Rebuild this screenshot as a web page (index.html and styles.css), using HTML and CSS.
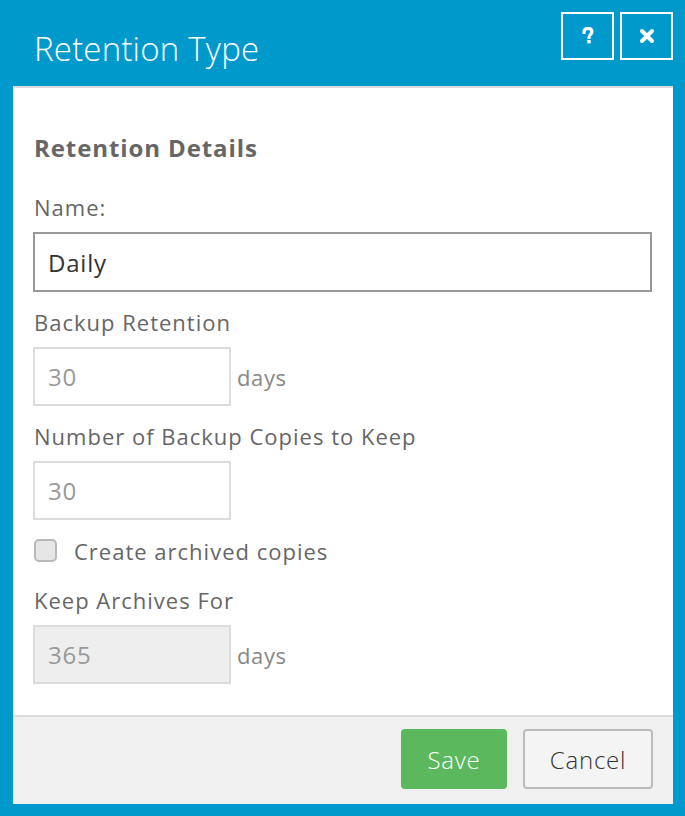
FILE: index.html
```html
<!DOCTYPE html>
<html lang="en">
  <head>
    <meta charset="UTF-8" />
    <meta name="viewport" content="width=device-width, initial-scale=1.0" />
    <title>Retention Type</title>

    <link rel="stylesheet" href="styles.css">
  </head>
  <body>
    <div class="modal">
      <div class="modal-header">
        <h1 class="modal-title">Retention Type</h1>
        <div class="header-buttons">
          <button class="header-btn" title="Help">
            <svg width="14" height="18" viewBox="0 0 14 18">
              <path d="M3 5.5 C3 2.5 5 1.5 7 1.5 C9.5 1.5 11 3 11 5 C11 7.2 8 7.8 8 10.5" fill="none" stroke="#fff" stroke-width="3.2" stroke-linecap="square"/>
              <rect x="6.3" y="13" width="3.4" height="3.4" fill="#fff"/>
            </svg>
          </button>
          <button class="header-btn" title="Close">
            <svg width="16" height="16" viewBox="0 0 16 16">
              <path d="M3 3 L13 13 M13 3 L3 13" stroke="#fff" stroke-width="4" stroke-linecap="round"/>
            </svg>
          </button>
        </div>
      </div>

      <div class="modal-body">
        <h2 class="section-title">Retention Details</h2>

        <div class="field">
          <label class="field-label">Name:</label>
          <input type="text" class="text-input wide" value="Daily">
        </div>

        <div class="field">
          <label class="field-label">Backup Retention</label>
          <div class="input-row">
            <input type="text" class="text-input short muted" value="30">
            <span class="unit">days</span>
          </div>
        </div>

        <div class="field">
          <label class="field-label">Number of Backup Copies to Keep</label>
          <input type="text" class="text-input short muted" value="30">
        </div>

        <label class="check-row">
          <span class="checkbox"></span>
          <span class="check-label">Create archived copies</span>
        </label>

        <div class="field last">
          <label class="field-label">Keep Archives For</label>
          <div class="input-row">
            <input type="text" class="text-input short muted" value="365" disabled>
            <span class="unit">days</span>
          </div>
        </div>
      </div>

      <div class="modal-footer">
        <button class="btn btn-save">Save</button>
        <button class="btn btn-cancel">Cancel</button>
      </div>
    </div>
  </body>
</html>
```

FILE: styles.css
```css
html,
body {
  margin: 0;
  box-sizing: border-box;
  font-family: "Open Sans", sans-serif;
}

*,
*::before,
*::after {
  box-sizing: inherit;
}

.modal {
  height: 816px;
  background: #0099cc;
  padding: 0 12px 12px 13px;
  display: flex;
  flex-direction: column;
}

.modal-header {
  height: 86px;
  display: flex;
  align-items: flex-start;
  justify-content: space-between;
}

.modal-title {
  margin: 26px 0 0 21px;
  font-size: 33px;
  font-weight: 300;
  line-height: normal;
  letter-spacing: 0.2px;
  color: #fff;
}

.header-buttons {
  display: flex;
  gap: 6px;
  margin-top: 12px;
}

.header-btn {
  width: 53px;
  height: 48px;
  padding: 0;
  background: transparent;
  border: 2px solid #fff;
  display: flex;
  align-items: center;
  justify-content: center;
  cursor: pointer;
}

.modal-body {
  flex: 1;
  background: #fff;
  border-top: 2px solid #dcdcdc;
  padding: 44px 21px 0 20px;
  color: #666;
  letter-spacing: 1px;
}

.section-title {
  margin: 0 0 28px 1px;
  font-size: 24px;
  font-weight: 700;
  line-height: 32px;
  letter-spacing: 0.9px;
  color: #666;
}

.field {
  margin-bottom: 15px;
}

.field.last {
  margin-bottom: 0;
}

.field-label {
  display: block;
  margin: 0 0 10px 1px;
  font-size: 22px;
  line-height: 30px;
  color: #666;
}

.input-row {
  display: flex;
  align-items: center;
}

.text-input {
  display: block;
  height: 60px;
  padding: 0 13px;
  font-family: inherit;
  font-size: 24px;
  letter-spacing: 0.8px;
  color: #333;
  background: #fff;
  border: 2px solid #999;
  border-radius: 0;
  outline: none;
}

.text-input.wide {
  width: 100%;
}

.text-input.short {
  width: 198px;
  border-color: #dcdcdc;
  height: 59px;
}

.text-input.muted {
  color: #999;
}

.text-input:disabled {
  background: #eee;
  color: #999;
}

.unit {
  margin-left: 6px;
  margin-top: 1px;
  font-size: 22px;
  letter-spacing: 0.6px;
  color: #888;
}

.check-row {
  display: flex;
  align-items: center;
  margin: 19px 0 23px 1px;
  height: 23px;
  cursor: pointer;
}

.checkbox {
  width: 23px;
  height: 23px;
  border: 2px solid #b8b8b8;
  border-radius: 5px;
  background: #e6e6e6;
}

.check-label {
  margin-left: 17px;
  font-size: 22px;
  color: #666;
}

.modal-footer {
  height: 89px;
  background: #f0f0f0;
  border-top: 2px solid #dcdcdc;
  display: flex;
  justify-content: flex-end;
  align-items: flex-start;
  gap: 16px;
  padding: 12px 20px 0 0;
}

.btn {
  height: 60px;
  font-family: inherit;
  font-size: 24px;
  font-weight: 300;
  letter-spacing: 0.8px;
  border-radius: 4px;
  cursor: pointer;
}

.btn-save {
  width: 106px;
  background: #5cb85c;
  border: none;
  color: #fff;
}

.btn-cancel {
  width: 130px;
  background: #f4f4f4;
  border: 2px solid #bbb;
  color: #333;
}
```
